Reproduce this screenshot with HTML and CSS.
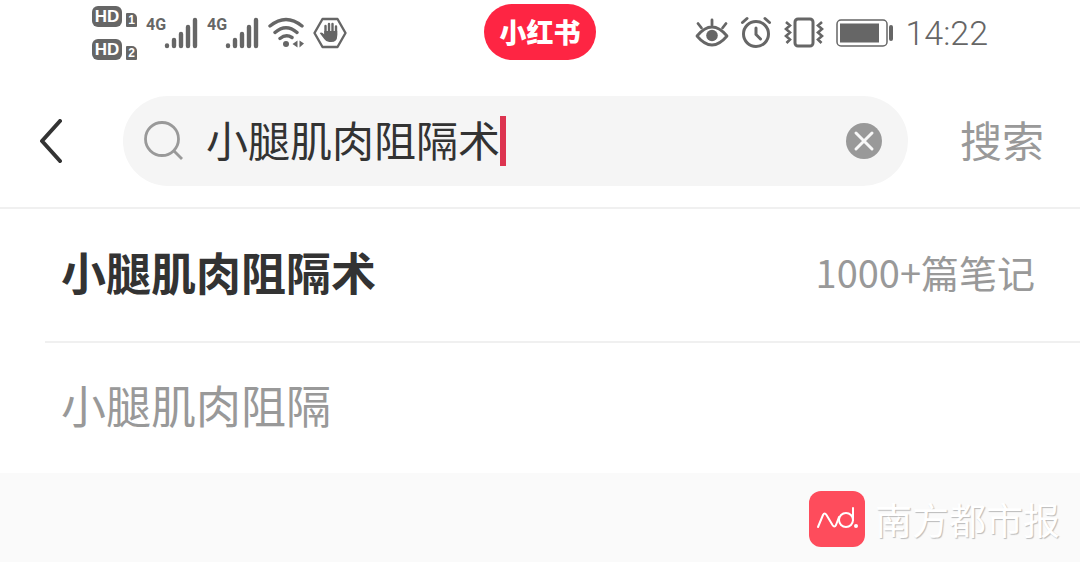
FILE: index.html
```html
<!DOCTYPE html>
<html lang="zh-CN">
<head>
    <meta charset="UTF-8">
    <meta name="viewport" content="width=device-width, initial-scale=1.0">
    <title>小腿肌肉阻隔术 - 搜索</title>
    <link rel="stylesheet" href="styles.css">
</head>
<body>

<header class="status-bar">
    <div class="status-left">
        <div class="sim-list">
            <div class="sim"><span class="hd">HD</span><span class="sim-no">1</span></div>
            <div class="sim"><span class="hd">HD</span><span class="sim-no">2</span></div>
        </div>
        <div class="signal">
            <span class="network">4G</span>
            <svg width="34" height="32" viewBox="0 0 34 32">
                <path d="M3 28.500v.5M10 23v6M17 17v12M24 10v19M31 3v26" stroke="currentColor" stroke-width="4.400" stroke-linecap="round"/>
            </svg>
        </div>
        <div class="signal">
            <span class="network">4G</span>
            <svg width="34" height="32" viewBox="0 0 34 32">
                <path d="M3 28.500v.5M10 23v6M17 17v12M24 10v19M31 3v26" stroke="currentColor" stroke-width="4.400" stroke-linecap="round"/>
            </svg>
        </div>
        <svg width="36" height="32" viewBox="0 0 36 32">
            <g fill="none" stroke="currentColor" stroke-width="3.400" stroke-linecap="round">
                <path d="M2 9Q18 -4 34 9M7 15.500Q18 6 29 15.500M12 21.500Q18 16.500 24 20.500"/>
            </g>
            <circle cx="18" cy="27" r="3" fill="currentColor"/>
            <path d="M29.500 23.500v7l-5-3.500zM31.500 23.500v7l4.500-4z" fill="currentColor"/>
        </svg>
        <svg width="34" height="34" viewBox="0 0 34 34">
            <path d="M9.500 3h15L32.500 17l-8 14h-15L1.500 17z" fill="none" stroke="currentColor" stroke-width="2.400" stroke-linejoin="round"/>
            <path d="M12.500 18V10M16 18V8M19.500 18V8M23 19V10.500" stroke="currentColor" stroke-width="2.400" stroke-linecap="round"/>
            <path d="M11.300 15h12.900v5q0 6-6 6h-2q-3 0-5-3l-4.500-6q2-1.500 4.600 1.500z" fill="currentColor"/>
        </svg>
    </div>

    <a class="logo" href="#">小红书</a>

    <div class="status-right">
        <svg width="34" height="34" viewBox="0 0 34 34">
            <path d="M2 20Q17 2 32 20Q17 38 2 20z" fill="none" stroke="currentColor" stroke-width="2.800" stroke-linejoin="round"/>
            <circle cx="17" cy="19.500" r="5.800" fill="currentColor"/>
            <path d="M17 9V4M6.500 12L3 7.500M27.500 12l3.500-4.500" stroke="currentColor" stroke-width="2.800" stroke-linecap="round"/>
        </svg>
        <svg width="32" height="34" viewBox="0 0 32 34">
            <circle cx="16" cy="18" r="12.500" fill="none" stroke="currentColor" stroke-width="3"/>
            <path d="M16 12v6.500l4.500 4.500M2.500 6.500l4.500-4M29.500 6.500l-4.500-4" fill="none" stroke="currentColor" stroke-width="3" stroke-linecap="round"/>
        </svg>
        <svg width="42" height="34" viewBox="0 0 42 34">
            <rect x="12" y="3" width="18" height="27" rx="3" fill="none" stroke="currentColor" stroke-width="3"/>
            <path d="M3 6l4 3.500-4 3.500 4 3.500-4 3.500 4 3.500-3.500 3.500M39 6l-4 3.500 4 3.500-4 3.500 4 3.500-4 3.500 3.500 3.500" fill="none" stroke="currentColor" stroke-width="2.600"/>
        </svg>
        <svg width="58" height="30" viewBox="0 0 58 30">
            <rect x="1" y="2" width="50" height="26" rx="4" fill="none" stroke="currentColor" stroke-width="1.500"/>
            <path d="M4 5.500h39v19H4z" fill="currentColor"/>
            <path d="M55 9v12" stroke="currentColor" stroke-width="4" stroke-linecap="round"/>
        </svg>
        <time class="clock">14:22</time>
    </div>
</header>

<form class="search-bar" action="#">
    <button class="back" type="button" aria-label="返回">
        <svg width="24" height="44" viewBox="0 0 24 44">
            <path d="M21 2L3 22l18 20" fill="none" stroke="currentColor" stroke-width="4" stroke-linecap="round" stroke-linejoin="round"/>
        </svg>
    </button>
    <div class="search-box">
        <svg class="search-icon" width="40" height="40" viewBox="0 0 40 40">
            <circle cx="18" cy="18" r="16.500" fill="none" stroke="currentColor" stroke-width="2.800"/>
            <path d="M30 30l8 8" stroke="currentColor" stroke-width="2.800"/>
        </svg>
        <input class="search-input" type="text" value="小腿肌肉阻隔术" aria-label="搜索内容">
        <span class="caret"></span>
        <button class="clear" type="button" aria-label="清除">
            <svg width="36" height="36" viewBox="0 0 36 36">
                <circle cx="18" cy="18" r="18" fill="currentColor"/>
                <path d="M10 10l16 16M26 10L10 26" stroke="#f8f8f8" stroke-width="3" stroke-linecap="round"/>
            </svg>
        </button>
    </div>
    <button class="submit" type="submit">搜索</button>
</form>

<main>
    <ul class="suggestions">
        <li><a class="suggestion exact" href="#">小腿肌肉阻隔术<span class="count">1000+篇笔记</span></a></li>
        <li><a class="suggestion" href="#">小腿肌肉阻隔</a></li>
    </ul>
</main>

<footer class="watermark">
    <svg width="56" height="56" viewBox="0 0 56 56">
        <rect width="56" height="56" rx="12" fill="#fe4c5c"/>
        <g fill="none" stroke="#fff" stroke-width="2" stroke-linecap="round" stroke-linejoin="round">
            <path d="M9 36l5-12q1.500-3 3.500 0l6 10q2 3 3.500 0l3-8"/>
            <circle cx="37" cy="29" r="7"/>
            <path d="M44 29V17"/>
        </g>
        <circle cx="47" cy="35" r="2" fill="#fff"/>
    </svg>
    <span>南方都市报</span>
</footer>

</body>
</html>
```
FILE: styles.css
```css
:root {
    --icon: #666;
    --text: #333;
    --muted: #999;
    --line: #f0f0f0;
    --red: #fe2543;
}

* {
    margin: 0;
    padding: 0;
    box-sizing: border-box;
}

body {
    min-height: 100vh;
    display: flex;
    flex-direction: column;
    font-family: 'Noto Sans CJK SC', sans-serif;
    background-color: #fafafa;
    color: var(--text);
}

svg {
    display: block;
    flex: none;
}

a {
    color: inherit;
    text-decoration: none;
}

button {
    border: none;
    background: none;
    color: inherit;
    font: inherit;
    cursor: pointer;
}

/* Status bar */
.status-bar {
    display: grid;
    grid-template-columns: 1fr auto 1fr;
    align-items: center;
    height: 66px;
    padding: 0 92px;
    background: #fff;
    color: var(--icon);
}

.status-left,
.status-right {
    display: flex;
    align-items: center;
}

.status-left {
    gap: 9px;
}

.status-right {
    justify-content: flex-end;
    gap: 11px;
}

.sim-list {
    display: grid;
    gap: 12px;
}

.sim {
    display: flex;
    align-items: flex-end;
    gap: 4px;
    color: #fff;
    font-family: 'Liberation Sans', sans-serif;
    font-weight: bold;
}

.hd {
    width: 30px;
    border-radius: 6px;
    background: var(--icon);
    font-size: 17px;
    line-height: 21px;
    text-align: center;
}

.sim-no {
    width: 11px;
    border-radius: 1px 5px 1px 1px;
    background: var(--icon);
    font-size: 12px;
    line-height: 14px;
    text-align: center;
}

.signal {
    display: flex;
}

.network {
    width: 18px;
    font-family: 'Liberation Sans Narrow', 'Roboto', sans-serif;
    font-size: 16px;
    font-weight: 700;
    line-height: 16px;
}

.logo {
    width: 112px;
    margin-bottom: 2px;
    border-radius: 28px;
    background: var(--red);
    color: #fff;
    font-size: 27px;
    font-weight: 900;
    line-height: 56px;
    text-align: center;
}

.clock {
    font-family: 'Roboto', sans-serif;
    font-size: 34px;
    font-weight: 300;
    line-height: 40px;
}

/* Search bar */
.search-bar {
    display: flex;
    align-items: center;
    padding: 30px 36px 21px;
    background: #fff;
    border-bottom: 2px solid var(--line);
}

.back {
    margin: 0 60px 0 3px;
}

.search-box {
    flex: 1;
    display: flex;
    align-items: center;
    height: 90px;
    padding: 0 26px 0 21px;
    border-radius: 45px;
    background: #f5f5f5;
}

.search-icon {
    color: var(--muted);
}

.search-input {
    width: 7em;
    margin-left: 22px;
    padding-bottom: 5px;
    border: none;
    outline: none;
    background: none;
    color: var(--text);
    font-family: inherit;
    font-size: 42px;
    line-height: 60px;
}

.caret {
    width: 6px;
    height: 50px;
    background: #dd3450;
}

.clear {
    margin-left: auto;
    color: var(--muted);
}

.submit {
    margin-left: 52px;
    padding-bottom: 5px;
    color: var(--muted);
    font-size: 42px;
    line-height: 60px;
}

/* Suggestions */
.suggestions {
    list-style: none;
    background: #fff;
}

.suggestions li {
    padding-left: 45px;
}

.suggestion {
    display: flex;
    align-items: center;
    justify-content: space-between;
    height: 132px;
    padding: 0 45px 8px 16px;
    color: var(--muted);
    font-size: 45px;
}

.suggestions li + li .suggestion {
    border-top: 2px solid var(--line);
}

.exact {
    color: var(--text);
    font-weight: 700;
}

.count {
    color: var(--muted);
    font-size: 38px;
    font-weight: 400;
}

/* Watermark */
.watermark {
    display: flex;
    align-items: center;
    justify-content: flex-end;
    gap: 10px;
    padding: 18px 20px 0 0;
    color: #fff;
    font-size: 37px;
    line-height: 56px;
    text-shadow: 1px 1px 1px #bbb;
}
```
